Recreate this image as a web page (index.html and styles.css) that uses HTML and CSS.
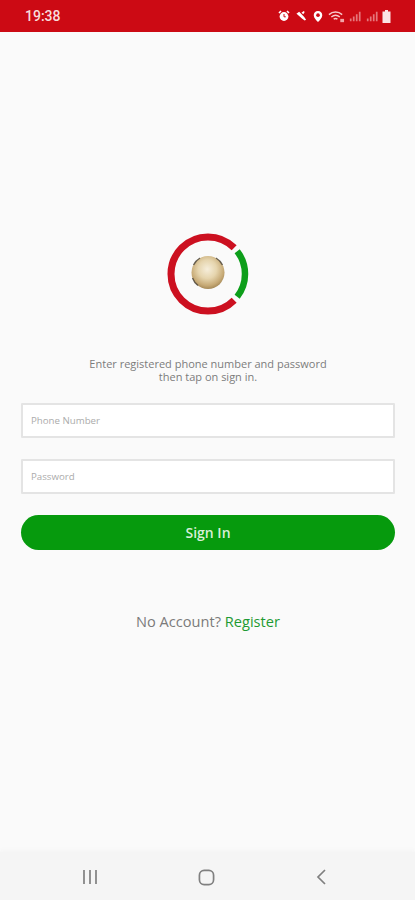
FILE: index.html
```html
<!DOCTYPE html>
<html lang="en">
<head>
  <meta charset="UTF-8">
  <meta name="viewport" content="width=device-width, initial-scale=1.0">
  <title>Sign In</title>
  <link rel="stylesheet" href="styles.css">
</head>
<body>
  <header class="status-bar">
    <span class="clock">19:38</span>
    <div class="status-icons">
      <!-- alarm -->
      <svg width="12" height="12" viewBox="0 0 12 12"><circle cx="6" cy="6.5" r="4.4" fill="#fff"/><path d="M1 3l2-2M11 3L9 1" stroke="#fff" stroke-width="1.6"/><path d="M6 4v2.8h1.8" stroke="#cc0a14" fill="none"/></svg>
      <!-- mute -->
      <svg class="mute" width="12" height="12" viewBox="0 0 13 12"><path d="M1.5 3.5l3-2 5.5 5.5 2 3-1.5.8-3-2L2 3.8z" fill="#fff"/><path d="M7 2.5l2.5-1.8 1 1L9 4z" fill="#fff"/></svg>
      <!-- location -->
      <svg width="10" height="13" viewBox="0 0 11 13"><path d="M5.5.5C2.7.5.8 2.5.8 5c0 3 3 5.6 4.7 7.5C7.2 10.6 10.2 8 10.2 5 10.2 2.5 8.3.5 5.5.5z" fill="#fff"/><circle cx="5.5" cy="5" r="2" fill="#cc0a14"/></svg>
      <!-- wifi -->
      <svg width="17" height="13" viewBox="0 0 18 13"><path d="M1 4.5C5 .8 11 .8 15 4.5M3.5 7C6.5 4.5 9.5 4.5 12.5 7M6 9.3c1.500-1 2.500-1 4 0" fill="none" stroke="#f7c9cb" stroke-width="1.5"/><path d="M13 9h4v3.5h-4z" fill="#f2a4a8"/></svg>
      <!-- signal -->
      <svg width="12" height="12" viewBox="0 0 14 12"><path d="M1 9h2v3H1zM4.5 6.5h2V12h-2zM8 4h2v8H8zM11.5 1h2v11h-2z" fill="#e5777c"/></svg>
      <svg width="12" height="12" viewBox="0 0 14 12"><path d="M1 9h2v3H1zM4.5 6.5h2V12h-2zM8 4h2v8H8zM11.5 1h2v11h-2z" fill="#e5777c"/></svg>
      <!-- battery -->
      <svg width="9" height="13" viewBox="0 0 9 13"><path d="M3 0h3v1.5h2.5V13H.5V1.5H3z" fill="#fbe3e4"/></svg>
    </div>
  </header>

  <main class="login">
    <svg class="logo" width="82" height="82" viewBox="0 0 82 82">
      <defs>
        <radialGradient id="ball" cx="48%" cy="40%" r="62%">
          <stop offset="0%" stop-color="#f6eedb"/>
          <stop offset="45%" stop-color="#e6d5ae"/>
          <stop offset="80%" stop-color="#c6a975"/>
          <stop offset="100%" stop-color="#a08453"/>
        </radialGradient>
      </defs>
      <path d="M67.16 14.84A37 37 0 1 0 67.16 67.16" fill="none" stroke="#cc1020" stroke-width="7"/>
      <path d="M70.16 18.22A37 37 0 0 1 70.16 63.78" fill="none" stroke="#0d9e1a" stroke-width="6.5"/>
      <circle cx="41" cy="39.5" r="16.5" fill="url(#ball)"/>
      <!-- dark rim only on part of the ball -->
      <path d="M26.5 32A16.5 16.5 0 0 1 33 25M49 25A16.5 16.5 0 0 1 55.500 32M25.500 45A16.500 16.500 0 0 0 31 52.500" fill="none" stroke="#3f3a30" stroke-width="1.4" opacity="0.75"/>
    </svg>

    <p class="hint">Enter registered phone number and password<br>then tap on sign in.</p>

    <form class="login-form">
      <input class="field" type="text" placeholder="Phone Number">
      <input class="field" type="password" placeholder="Password">
      <button class="sign-in" type="button">Sign In</button>
    </form>

    <p class="register">No Account? <a href="#">Register</a></p>
  </main>

  <nav class="nav-bar">
    <svg width="16" height="16" viewBox="0 0 16 16"><path d="M2 1v14M8 1v14M14 1v14" stroke="#808080" stroke-width="1.7"/></svg>
    <svg width="17" height="17" viewBox="0 0 18 18"><rect x="1.5" y="1.5" width="15" height="15" rx="5" fill="none" stroke="#808080" stroke-width="1.8"/></svg>
    <svg width="12" height="16" viewBox="0 0 12 16"><path d="M10 1L3 8l7 7" fill="none" stroke="#808080" stroke-width="1.7"/></svg>
  </nav>
</body>
</html>
```

FILE: styles.css
```css
body {
  font-family: "Open Sans", Arial, sans-serif;
  margin: 0;
  padding: 0;
  height: 900px;
  overflow: hidden;
  display: flex;
  flex-direction: column;
  background-color: #fafafa;
}

.status-bar {
  height: 32px;
  flex-shrink: 0;
  background-color: #cc0a14;
  color: #f8dcdc;
  display: flex;
  align-items: center;
  justify-content: space-between;
  padding: 0 24px 0 25px;
}

.clock {
  font-family: Roboto, Arial, sans-serif;
  font-size: 14px;
  font-weight: 500;
}

.status-icons {
  display: flex;
  align-items: center;
  gap: 4.5px;
}

.status-icons .mute {
  margin-right: 2px;
}

.login {
  flex: 1;
  display: flex;
  flex-direction: column;
  align-items: center;
  padding: 201px 20px 0 21px;
}

.logo {
  display: block;
}

.hint {
  margin: 42px 0 0;
  font-size: 11px;
  line-height: 13px;
  color: #7c7c7c;
  text-align: center;
}

.login-form {
  width: 100%;
  margin-top: 20px;
  display: flex;
  flex-direction: column;
  gap: 21px;
}

.field {
  box-sizing: border-box;
  width: 100%;
  height: 35px;
  padding: 0 8px;
  background-color: #fff;
  border: 2px solid #e4e4e4;
  border-radius: 1px;
  font-family: inherit;
  font-size: 9.7px;
  outline: none;
}

.field::placeholder {
  color: #ababab;
}

.sign-in {
  height: 35px;
  border: none;
  border-radius: 18px;
  background-color: #069a0d;
  color: #d8efd8;
  font-family: inherit;
  font-size: 14px;
  font-weight: 600;
  cursor: pointer;
}

.register {
  margin: 61px 0 0;
  font-size: 14.6px;
  line-height: 20px;
  color: #7b7b7b;
}

.register a {
  color: #1e9a33;
  text-decoration: none;
}

.nav-bar {
  height: 48px;
  flex-shrink: 0;
  box-sizing: border-box;
  padding: 2px 6px 0 0;
  background-color: #f5f5f5;
  box-shadow: 0 -2px 4px #f5f5f5;
  display: flex;
  align-items: center;
  justify-content: center;
  gap: 100px;
}
```
